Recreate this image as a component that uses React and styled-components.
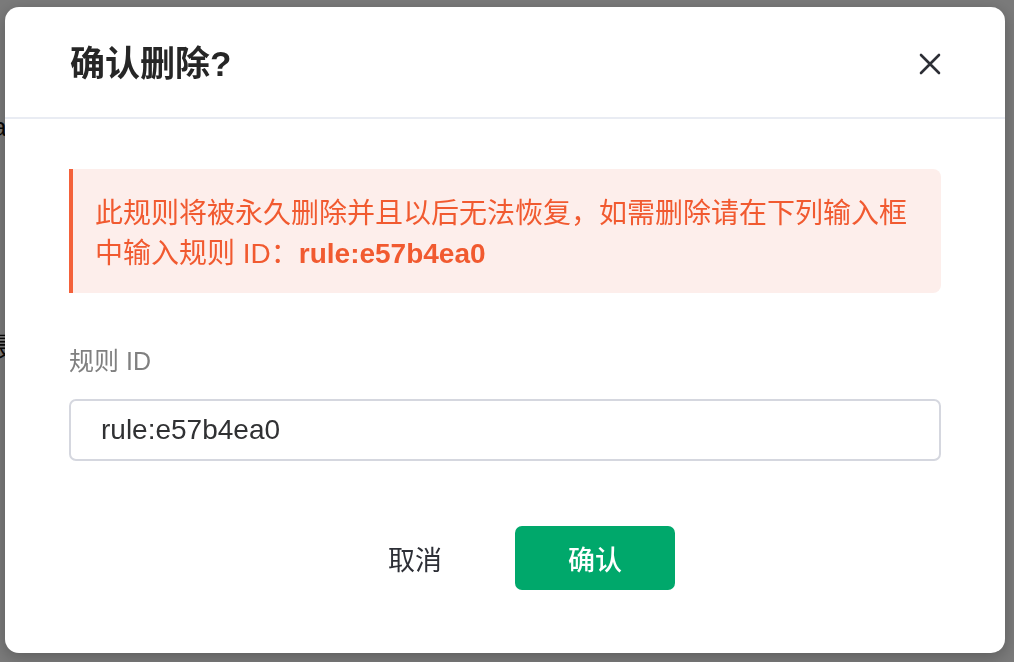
import React from 'react'
import styled, { createGlobalStyle } from 'styled-components'

const GlobalStyle = createGlobalStyle`
    html, body {
        margin: 0;
        padding: 0;
        height: 100%;
        overflow: hidden;
        background: #ffffff;
        font-family: "Liberation Sans", "Noto Sans CJK SC", sans-serif;
    }
`

const App = () => {
    return (
        <>
            <GlobalStyle />
            <Page>
                <PageLine first>Rule chain</PageLine>
                <PageLine>最后</PageLine>
            </Page>
            <Overlay>
                <Modal>
                    <Header>
                        <Title>确认删除?</Title>
                        <CloseButton aria-label="close">
                            <svg width="22" height="22" viewBox="0 0 22 22">
                                <path d="M2 2 L20 20 M20 2 L2 20" stroke="#2d2f36" strokeWidth="2.6" strokeLinecap="round" />
                            </svg>
                        </CloseButton>
                    </Header>
                    <Body>
                        <Alert>
                            此规则将被永久删除并且以后无法恢复，如需删除请在下列输入框中输入规则 ID：<strong>rule:e57b4ea0</strong>
                        </Alert>
                        <Field>
                            <Label>规则 ID</Label>
                            <Input defaultValue="rule:e57b4ea0" />
                        </Field>
                    </Body>
                    <Footer>
                        <Button>取消</Button>
                        <Button primary>确认</Button>
                    </Footer>
                </Modal>
            </Overlay>
        </>
    )
}

export default App;

const Page = styled.div `
    display: flex;
    flex-direction: column;
    padding-top: 112px;
`
const PageLine = styled.div `
    margin-left: ${p => p.first ? '-96px' : '-14px'};
    margin-bottom: ${p => p.first ? '190px' : '0'};
    font-size: 26px;
    line-height: 30px;
    color: #111;
    white-space: nowrap;
`
const Overlay = styled.div `
    position: fixed;
    inset: 0;
    background: rgba(0, 0, 0, 0.52);
    display: flex;
    align-items: flex-start;
    padding: 7px 0 0 5px;
`
const Modal = styled.div `
    width: 1000px;
    height: 646px;
    box-sizing: border-box;
    background: #fff;
    border-radius: 14px;
    box-shadow: 0 4px 16px rgba(0, 0, 0, 0.25);
    display: flex;
    flex-direction: column;
`
const Header = styled.div `
    height: 112px;
    box-sizing: border-box;
    padding: 0 64px 0 65px;
    border-bottom: 2px solid #e9ecf3;
    display: flex;
    align-items: center;
    justify-content: space-between;
`
const Title = styled.h2 `
    margin: 0;
    font-size: 35px;
    font-weight: 700;
    color: #262626;
    line-height: 44px;
    padding-top: 4px;
`
const CloseButton = styled.button `
    border: 0;
    background: none;
    padding: 0;
    width: 22px;
    height: 22px;
    display: flex;
    cursor: pointer;
    margin-top: 4px;
`
const Body = styled.div `
    padding: 50px 64px 0 64px;
    display: flex;
    flex-direction: column;
    gap: 52px;
`
const Alert = styled.div `
    background: #fdeeeb;
    border-left: 4px solid #f4613a;
    border-radius: 0 8px 8px 0;
    padding: 25px 22px 19px 22px;
    color: #f15a30;
    font-size: 28px;
    line-height: 40px;

    strong {
        font-weight: 700;
    }
`
const Field = styled.div `
    display: flex;
    flex-direction: column;
    gap: 22px;
`
const Label = styled.div `
    font-size: 25px;
    line-height: 32px;
    color: #808080;
`
const Input = styled.input `
    height: 62px;
    box-sizing: border-box;
    border: 2px solid #d5d7df;
    border-radius: 7px;
    padding: 0 30px;
    font-size: 28px;
    font-family: "Liberation Sans", "Noto Sans CJK SC", sans-serif;
    color: #303133;
    outline: none;
`
const Footer = styled.div `
    display: flex;
    justify-content: center;
    gap: 55px;
    margin-top: 65px;
    padding-left: 35px;
`
const Button = styled.button `
    width: ${p => p.primary ? '160px' : 'auto'};
    height: 64px;
    border: 0;
    border-radius: 7px;
    padding: ${p => p.primary ? '0' : '0 18px'};
    background: ${p => p.primary ? '#00a86b' : 'transparent'};
    color: ${p => p.primary ? '#fff' : '#2d2f36'};
    font-size: 27px;
    font-weight: ${p => p.primary ? 500 : 400};
    font-family: "Liberation Sans", "Noto Sans CJK SC", sans-serif;
    cursor: pointer;
`
